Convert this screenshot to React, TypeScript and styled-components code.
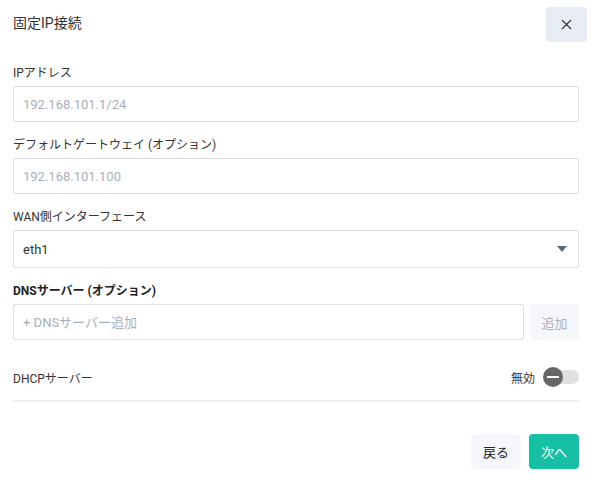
import styled, {createGlobalStyle} from "styled-components";
import {useState} from "react";

const GlobalStyle = createGlobalStyle`
    html, body {
        margin: 0;
        padding: 0;
        background: #FFFFFF;
    }

    body {
        font-family: Roboto, "Noto Sans CJK JP", sans-serif;
        color: #333333;
    }

    * {
        box-sizing: border-box;
    }
`

const StaticIpDialog = () => {

    const [dhcp, setDhcp] = useState<boolean>(false);
    const [wan, setWan] = useState<string>("eth1");

    return (
        <StyledDialog>
            <StyledHeader>
                <StyledTitle>固定IP接続</StyledTitle>
                <StyledCloseBtn aria-label="close">
                    <svg width="11" height="11" viewBox="0 0 12 12">
                        <path d="M1.5 1.5 L10.5 10.5 M10.5 1.5 L1.5 10.5" stroke="#2a2a33" strokeWidth="1.5"
                              strokeLinecap="round"/>
                    </svg>
                </StyledCloseBtn>
            </StyledHeader>

            <StyledBody>
                <StyledField>
                    <StyledLabel>IPアドレス</StyledLabel>
                    <StyledInput placeholder="192.168.101.1/24"/>
                </StyledField>

                <StyledField>
                    <StyledLabel>デフォルトゲートウェイ (オプション)</StyledLabel>
                    <StyledInput placeholder="192.168.101.100"/>
                </StyledField>

                <StyledField>
                    <StyledLabel>WAN側インターフェース</StyledLabel>
                    <StyledSelectWrap>
                        <StyledSelect value={wan} onChange={(e) => setWan(e.target.value)}>
                            <option value="eth1">eth1</option>
                            <option value="eth2">eth2</option>
                        </StyledSelect>
                        <StyledCaret/>
                    </StyledSelectWrap>
                </StyledField>

                <StyledField>
                    <StyledLabel $bold={true}>DNSサーバー (オプション)</StyledLabel>
                    <StyledDnsRow>
                        <StyledDnsInput placeholder="+ DNSサーバー追加"/>
                        <StyledAddBtn disabled>追加</StyledAddBtn>
                    </StyledDnsRow>
                </StyledField>

                <StyledSwitchRow>
                    <StyledSwitchLabel>DHCPサーバー</StyledSwitchLabel>
                    <StyledSwitchArea>
                        <StyledSwitchState>{dhcp ? "有効" : "無効"}</StyledSwitchState>
                        <StyledSwitch $on={dhcp} onClick={() => setDhcp(!dhcp)}>
                            <StyledKnob $on={dhcp}/>
                        </StyledSwitch>
                    </StyledSwitchArea>
                </StyledSwitchRow>
                <StyledDivider/>

                <StyledFooter>
                    <StyledFooterBtn $label={"prev"}>戻る</StyledFooterBtn>
                    <StyledFooterBtn $label={"next"}>次へ</StyledFooterBtn>
                </StyledFooter>
            </StyledBody>
        </StyledDialog>
    )
}

const App = () => {
    return (
        <>
            <GlobalStyle/>
            <StaticIpDialog/>
        </>
    )
}

export default App

const StyledDialog = styled.div`
    width: 592px;
    height: 484px;
    background: #FFFFFF;
`

const StyledHeader = styled.div`
    display: flex;
    align-items: center;
    justify-content: space-between;
    height: 47px;
    padding: 6px 5px 6px 13px;
`

const StyledTitle = styled.div`
    font-size: 14px;
    color: #333333;
    margin-top: -3px;
`

const StyledCloseBtn = styled.button`
    display: flex;
    align-items: center;
    justify-content: center;
    width: 41px;
    height: 35px;
    margin-top: 1px;
    border: none;
    border-radius: 4px;
    background: #E8ECF5;
    padding: 0;
    cursor: pointer;
`

const StyledBody = styled.div`
    display: flex;
    flex-direction: column;
    padding: 18px 13px 0 13px;
`

const StyledField = styled.div`
    display: flex;
    flex-direction: column;
    margin-bottom: 15px;
`

const StyledLabel = styled.div<{ $bold?: boolean }>`
    font-size: 12px;
    line-height: 16px;
    margin-bottom: 5px;
    color: ${(props) => props.$bold ? "#222222" : "#333333"};
    font-weight: ${(props) => props.$bold ? 700 : 400};
`

const StyledInput = styled.input`
    display: block;
    width: 100%;
    height: 36px;
    flex-shrink: 0;
    border: 1px solid #DCE0E6;
    border-radius: 2px;
    padding: 0 9px;
    font-family: Roboto, "Noto Sans CJK JP", sans-serif;
    font-size: 13px;
    color: #333333;
    outline: none;

    &::placeholder {
        color: #A9AFB8;
    }
`

const StyledDnsInput = styled(StyledInput)`
    flex: 1;
    width: auto;
    min-width: 0;
`

const StyledSelectWrap = styled.div`
    position: relative;
`

const StyledSelect = styled.select`
    display: block;
    width: 100%;
    height: 38px;
    border: 1px solid #DCE0E6;
    border-radius: 2px;
    padding: 0 9px;
    appearance: none;
    background: #FFFFFF;
    font-family: Roboto, "Noto Sans CJK JP", sans-serif;
    font-size: 13px;
    color: #333333;
    outline: none;
`

const StyledCaret = styled.span`
    position: absolute;
    right: 12px;
    top: 16px;
    width: 0;
    height: 0;
    border-left: 5px solid transparent;
    border-right: 5px solid transparent;
    border-top: 6px solid #5F6675;
    pointer-events: none;
`

const StyledDnsRow = styled.div`
    display: flex;
    align-items: center;
    gap: 6px;
`

const StyledAddBtn = styled.button`
    width: 49px;
    height: 36px;
    flex-shrink: 0;
    border: none;
    border-radius: 4px;
    background: #F5F7FA;
    color: #A9B0BA;
    font-family: Roboto, "Noto Sans CJK JP", sans-serif;
    font-size: 13px;
    padding: 0;
`

const StyledSwitchRow = styled.div`
    display: flex;
    align-items: center;
    justify-content: space-between;
    height: 36px;
    margin-top: 4px;
`

const StyledSwitchLabel = styled.div`
    font-size: 12px;
    color: #333333;
`

const StyledSwitchArea = styled.div`
    display: flex;
    align-items: center;
    gap: 9px;
`

const StyledSwitchState = styled.div`
    font-size: 12px;
    color: #333333;
`

const StyledSwitch = styled.div<{ $on: boolean }>`
    position: relative;
    width: 35px;
    height: 14px;
    border-radius: 7px;
    background: ${(props) => props.$on ? "#9FE3D6" : "#E0E0E0"};
    cursor: pointer;
`

const StyledKnob = styled.div<{ $on: boolean }>`
    position: absolute;
    top: -3px;
    left: ${(props) => props.$on ? "15px" : "-1px"};
    width: 20px;
    height: 20px;
    border-radius: 50%;
    background: ${(props) => props.$on ? "#17C0A5" : "#666666"};

    &::after {
        content: "";
        position: absolute;
        left: 4px;
        right: 4px;
        top: 9px;
        height: 2px;
        background: #FFFFFF;
    }
`

const StyledDivider = styled.div`
    height: 2px;
    background: #EEEFF2;
    margin-top: 5px;
`

const StyledFooter = styled.div`
    display: flex;
    justify-content: flex-end;
    gap: 8px;
    margin-top: 32px;
`

const StyledFooterBtn = styled.button<{ $label: string }>`
    width: 50px;
    height: 35px;
    border: none;
    border-radius: 4px;
    padding: 0;
    font-family: Roboto, "Noto Sans CJK JP", sans-serif;
    font-size: 13px;
    cursor: pointer;
    color: ${(props) => props.$label === "prev" ? "#222222" : "#FFFFFF"};
    background: ${(props) => props.$label === "prev" ? "#F5F7FA" : "#17C0A5"};
`
